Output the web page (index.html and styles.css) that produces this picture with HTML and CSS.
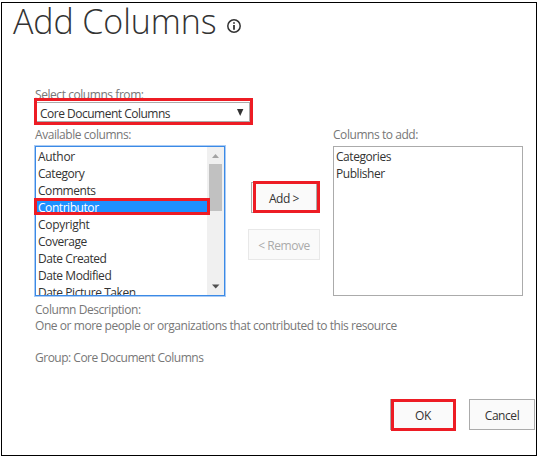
FILE: index.html
```html
<!DOCTYPE html>
<html lang="en">
<head>
<meta charset="utf-8">
<title>Add Columns</title>
<link rel="stylesheet" href="styles.css">
</head>
<body>
<main class="page">
  <header class="header">
    <h1 class="title">Add Columns</h1>
    <svg class="info" viewBox="0 0 14 14" width="14" height="14">
      <circle cx="7" cy="7" r="6.2" fill="none" stroke="#333" stroke-width="1.5"/>
      <path d="M7 3.2v1.6M7 5.9v4.8" stroke="#333" stroke-width="1.8"/>
    </svg>
  </header>
  <section class="source">
    <div class="label label-source">Select columns from:</div>
    <div class="select marked">
      <span class="select-text">Core Document Columns</span>
      <svg class="caret" viewBox="0 0 8 7" width="8" height="7"><path d="M1 0h6.400L4.200 7z" fill="#333"/></svg>
    </div>
  </section>
  <section class="picker">
    <div class="column">
      <div class="label">Available columns:</div>
      <div class="listbox focused">
        <ul class="options">
          <li class="author">Author</li>
          <li>Category</li>
          <li>Comments</li>
          <li class="selected marked">Contributor</li>
          <li class="copyright">Copyright</li>
          <li>Coverage</li>
          <li>Date Created</li>
          <li>Date Modified</li>
          <li>Date Picture Taken</li>
        </ul>
        <div class="scrollbar">
          <svg class="arrow" viewBox="0 0 17 17" width="17" height="17"><path d="M5 11l3.500-4 3.500 4z" fill="#a3a3a3"/></svg>
          <div class="thumb"></div>
          <svg class="arrow arrow-down" viewBox="0 0 17 17" width="17" height="17"><path d="M5 6.500h7.500L8.700 10.500z" fill="#505050"/></svg>
        </div>
      </div>
    </div>
    <div class="actions">
      <button class="button add marked">Add &gt;</button>
      <button class="button remove" disabled>&lt; Remove</button>
    </div>
    <div class="column">
      <div class="label">Columns to add:</div>
      <div class="listbox">
        <ul class="options targets">
          <li>Categories</li>
          <li>Publisher</li>
        </ul>
      </div>
    </div>
  </section>
  <section class="description">
    <p>Column Description:</p>
    <p>One or more people or organizations that contributed to this resource</p>
    <p class="group">Group: Core Document Columns</p>
  </section>
  <footer class="footer">
    <button class="button ok marked">OK</button>
    <button class="button cancel">Cancel</button>
  </footer>
</main>
</body>
</html>
```

FILE: styles.css
```css
* { box-sizing: border-box; }

body {
  margin: 0;
  padding: 2px 1px 1px;
  background: #fff;
  color: #333;
  font: 12px/17px "Open Sans", "Noto Sans", sans-serif;
  letter-spacing: -0.44px;
  white-space: nowrap;
}

.page {
  width: 536px;
  height: 454px;
  border: 1px solid #000;
}

.header {
  display: flex;
  align-items: flex-start;
  height: 83px;
  padding-left: 11px;
}

.title {
  width: 214px;
  margin: 0;
  font-size: 34px;
  font-weight: 300;
  line-height: 36px;
  letter-spacing: -0.1px;
}

.info { margin-top: 16px; }

.source,
.picker,
.description { margin-left: 33px; }

.label { color: #777; }

.source { height: 40px; }

.label-source { height: 13px; }

.marked { position: relative; }

/* Red call-out frame drawn over an element's edges */
.marked::after {
  content: "";
  position: absolute;
  border: 3px solid #ed1c24;
}

.select {
  display: flex;
  align-items: center;
  justify-content: space-between;
  width: 215px;
  height: 20px;
  margin-top: 3px;
  padding: 2px 5px 0 4px;
  border: 1px solid #ababab;
  background: #fff;
  letter-spacing: -0.5px;
}

.select.marked::after { inset: -5px -4px -4px -2px; }

.caret { margin-top: -1px; }

.picker { display: flex; }

.column { width: 190px; }

.column .label { height: 20px; }

.listbox {
  display: flex;
  width: 190px;
  height: 150px;
  border: 1px solid #ababab;
}

.focused {
  border-color: #3b8ae6;
  box-shadow: 0 0 0 1px #a9cbf5;
}

.options {
  flex: 1;
  height: 148px;
  margin: 0;
  padding: 0;
  overflow: hidden;
  list-style: none;
}

.options li { height: 17px; padding: 1px 0 0 2px; }

.options .author,
.options .copyright { letter-spacing: -0.3px; }

.targets { letter-spacing: -0.44px; }

.focused .options { overflow: visible; clip-path: inset(0 -4px 0 -3px); }

.options .selected {
  color: #fff;
  background: #1e90ff;
}

.options .selected::after { inset: 0 -3px 0 -2px; }

.scrollbar {
  display: flex;
  flex-direction: column;
  width: 17px;
  background: #f0f0f0;
}

.arrow { flex: none; }

.arrow-down { margin-top: auto; }

.thumb {
  width: 13px;
  height: 47px;
  margin-left: 2px;
  background: #c1c1c1;
}

.actions {
  display: flex;
  flex-direction: column;
  align-items: flex-end;
  gap: 16px;
  width: 108px;
  padding: 56px 13px 0 0;
}

.button {
  width: 66px;
  height: 31px;
  padding: 2px 0 0;
  border: 1px solid #ababab;
  background: #fafafa;
  color: #333;
  font: inherit;
  letter-spacing: inherit;
}

.add { margin-right: 3px; }

.add.marked::after { inset: -2px -4px -1px 1px; }

.remove {
  width: 72px;
  border-color: #e8e8e8;
  color: #aaa;
}

.description { padding-top: 5px; color: #777; }

.description p { height: 16px; margin: 0; }

.description .group { margin-top: 16px; letter-spacing: -0.5px; }

.footer {
  display: flex;
  justify-content: flex-end;
  gap: 13px;
  margin: 34px 1px 0 0;
}

.ok.marked::after { inset: -1px -1px -2px 0; }
```
